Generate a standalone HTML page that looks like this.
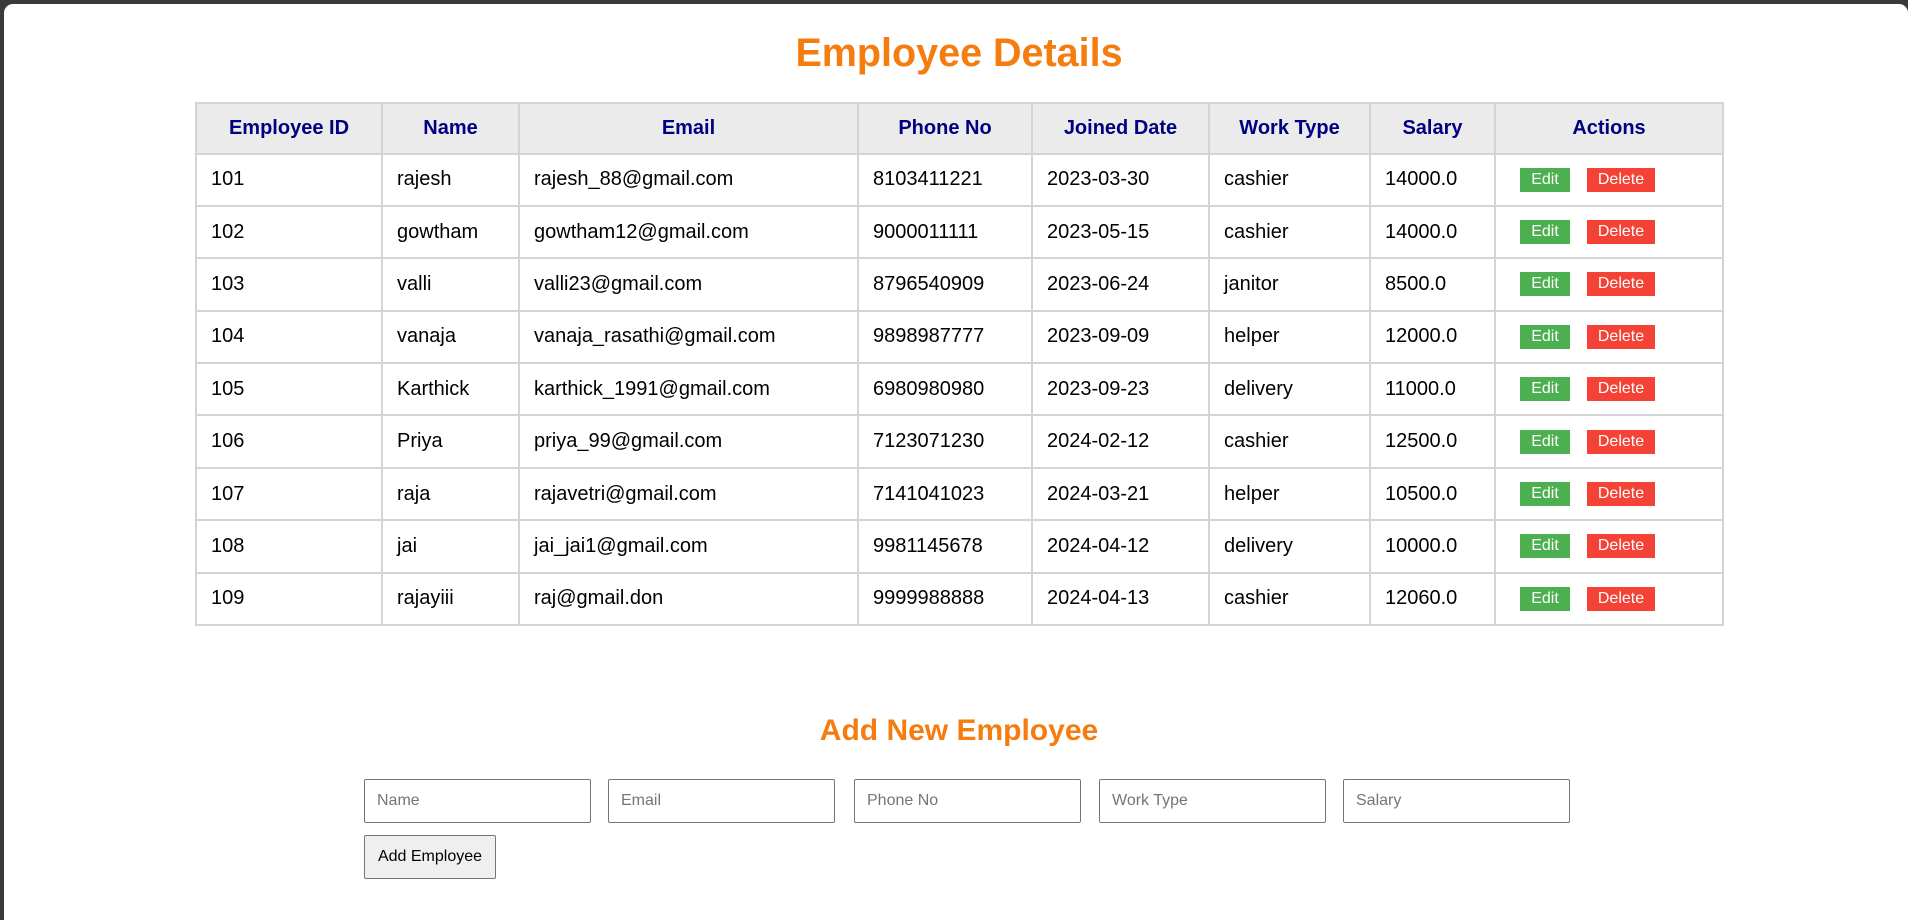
<!DOCTYPE html>
<html><head><meta charset="utf-8"><style>
html,body{margin:0;padding:0;width:1908px;height:920px;overflow:hidden;background:#3a3a3a;font-family:"Liberation Sans",Arial,sans-serif;}
#p{position:absolute;left:4px;top:4px;right:0;bottom:0;background:#fff;border-radius:9px 9px 0 0;}
h1{position:absolute;left:5px;width:1908px;top:29px;margin:0;text-align:center;color:#f57c0f;font-size:39.5px;font-weight:bold;line-height:48px;}
table{position:absolute;left:195px;top:102px;border-collapse:collapse;table-layout:fixed;width:1527px;font-size:20px;}
th,td{border:2px solid #d4d4d4;height:50.4px;padding:0 0 0 14px;text-align:left;color:#000;}
th{background:#ebebeb;color:#000080;text-align:center;padding:0;font-size:20px;height:48.5px;}
.b{display:inline-block;color:#fff;font-size:16px;height:24px;line-height:24px;text-align:center;vertical-align:middle;}
.e{background:#4caf50;width:50px;margin-left:10px;}
.d{background:#f44336;width:68px;margin-left:17px;}
h2{position:absolute;left:5px;width:1908px;top:712px;margin:0;text-align:center;color:#f57c0f;font-size:30px;line-height:38px;}
.i{position:absolute;top:779px;border:1px solid #767676;border-radius:2px;box-sizing:border-box;width:227px;height:44px;font-size:16px;color:#757575;line-height:42px;padding-left:12px;}
#btn{position:absolute;left:364px;top:835px;width:132px;height:44px;box-sizing:border-box;border:1px solid #767676;border-radius:2px;background:#efefef;font-size:16px;line-height:42px;text-align:center;color:#000;}
</style></head><body><div id="p"></div>
<h1>Employee Details</h1>
<table>
<colgroup><col style="width:186px"><col style="width:137px"><col style="width:339px"><col style="width:174px"><col style="width:177px"><col style="width:161px"><col style="width:125px"><col style="width:228px"></colgroup>
<tr><th>Employee ID</th><th>Name</th><th>Email</th><th>Phone No</th><th>Joined Date</th><th>Work Type</th><th>Salary</th><th>Actions</th></tr>
<tr><td>101</td><td>rajesh</td><td>rajesh_88@gmail.com</td><td>8103411221</td><td>2023-03-30</td><td>cashier</td><td>14000.0</td><td><span class="b e">Edit</span><span class="b d">Delete</span></td></tr>
<tr><td>102</td><td>gowtham</td><td>gowtham12@gmail.com</td><td>9000011111</td><td>2023-05-15</td><td>cashier</td><td>14000.0</td><td><span class="b e">Edit</span><span class="b d">Delete</span></td></tr>
<tr><td>103</td><td>valli</td><td>valli23@gmail.com</td><td>8796540909</td><td>2023-06-24</td><td>janitor</td><td>8500.0</td><td><span class="b e">Edit</span><span class="b d">Delete</span></td></tr>
<tr><td>104</td><td>vanaja</td><td>vanaja_rasathi@gmail.com</td><td>9898987777</td><td>2023-09-09</td><td>helper</td><td>12000.0</td><td><span class="b e">Edit</span><span class="b d">Delete</span></td></tr>
<tr><td>105</td><td>Karthick</td><td>karthick_1991@gmail.com</td><td>6980980980</td><td>2023-09-23</td><td>delivery</td><td>11000.0</td><td><span class="b e">Edit</span><span class="b d">Delete</span></td></tr>
<tr><td>106</td><td>Priya</td><td>priya_99@gmail.com</td><td>7123071230</td><td>2024-02-12</td><td>cashier</td><td>12500.0</td><td><span class="b e">Edit</span><span class="b d">Delete</span></td></tr>
<tr><td>107</td><td>raja</td><td>rajavetri@gmail.com</td><td>7141041023</td><td>2024-03-21</td><td>helper</td><td>10500.0</td><td><span class="b e">Edit</span><span class="b d">Delete</span></td></tr>
<tr><td>108</td><td>jai</td><td>jai_jai1@gmail.com</td><td>9981145678</td><td>2024-04-12</td><td>delivery</td><td>10000.0</td><td><span class="b e">Edit</span><span class="b d">Delete</span></td></tr>
<tr><td>109</td><td>rajayiii</td><td>raj@gmail.don</td><td>9999988888</td><td>2024-04-13</td><td>cashier</td><td>12060.0</td><td><span class="b e">Edit</span><span class="b d">Delete</span></td></tr>
</table>
<h2>Add New Employee</h2>
<div class="i" style="left:364px">Name</div>
<div class="i" style="left:608px">Email</div>
<div class="i" style="left:854px">Phone No</div>
<div class="i" style="left:1099px">Work Type</div>
<div class="i" style="left:1343px">Salary</div>
<div id="btn">Add Employee</div>
</body></html>
